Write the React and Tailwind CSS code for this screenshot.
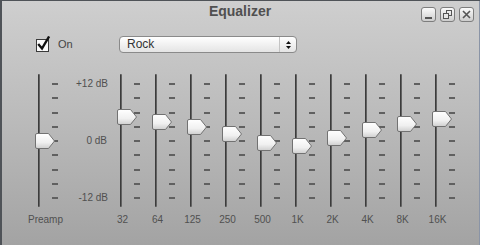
import React from 'react'

const bands = [
  { label: '32', top: 35 },
  { label: '64', top: 40 },
  { label: '125', top: 45 },
  { label: '250', top: 52 },
  { label: '500', top: 61 },
  { label: '1K', top: 64 },
  { label: '2K', top: 56 },
  { label: '4K', top: 48 },
  { label: '8K', top: 42 },
  { label: '16K', top: 37 },
]

const ticks = [0, 1, 2, 3, 4, 5, 6, 7, 8]

function Thumb({ top }) {
  return (
    <svg className="absolute left-[-3px]" style={{ top }} width="21" height="16" viewBox="0 0 21 16">
      <defs>
        <linearGradient id="thumbFill" x1="0" y1="0" x2="0" y2="1">
          <stop offset="0" stopColor="#ffffff" />
          <stop offset="0.6" stopColor="#f0f0f0" />
          <stop offset="1" stopColor="#cfcfcf" />
        </linearGradient>
      </defs>
      <path
        d="M2 0.5 H13.5 L19.5 8 L13.5 15.5 H2 Q0.5 15.5 0.5 14 V2 Q0.5 0.5 2 0.5 Z"
        fill="url(#thumbFill)"
        stroke="#727272"
      />
    </svg>
  )
}

function Slider({ top }) {
  return (
    <div className="flex h-[133px]">
      <div className="relative w-[5px] h-full rounded-full bg-gradient-to-r from-[#2e2e2e] via-[#4a4a4a] to-[#7c7c7c]">
        <Thumb top={top} />
      </div>
      <div className="ml-[12px] flex flex-col justify-between pt-[9px] pb-[8px]">
        {ticks.map((i) => (
          <div key={i} className="w-[6px] h-[2px] bg-[#606060]" />
        ))}
      </div>
    </div>
  )
}

function Column({ label, top, labelClass = '' }) {
  return (
    <div className="w-[35px] shrink-0 flex flex-col">
      <div className="pl-[15px]">
        <Slider top={top} />
      </div>
      <div className={`mt-[7px] text-center text-[10px] leading-[12px] text-[#505050] whitespace-nowrap ${labelClass}`}>
        {label}
      </div>
    </div>
  )
}

function WinButton({ children }) {
  return (
    <div className="w-[15px] h-[15px] rounded-[3px] border border-[#7d7d7d] bg-gradient-to-b from-[#fafafa] to-[#cdcdcd] flex items-center justify-center">
      {children}
    </div>
  )
}

export default function App() {
  return (
    <div className="w-[480px] h-[245px] overflow-hidden bg-gradient-to-b from-[#cfcfcf] via-[#bababa] to-[#a3a3a3] shadow-[inset_2px_1px_0_#4f5358,inset_-1px_0_0_#8a94a6] font-['Liberation_Sans',Arial,sans-serif] select-none">
      {/* title bar */}
      <div className="flex h-[26px]">
        <div className="w-[59px]" />
        <div className="flex-1 pt-[3px] text-center text-[14px] leading-[16px] font-bold text-[#505050]">
          Equalizer
        </div>
        <div className="flex gap-[4px] pt-[7px] pr-[6px]">
          <WinButton>
            <div className="w-[7px] h-[2px] bg-[#555] mt-[6px]" />
          </WinButton>
          <WinButton>
            <svg width="9" height="9" viewBox="0 0 9 9">
              <rect x="3.5" y="0.5" width="5" height="5" fill="none" stroke="#555" />
              <rect x="0.5" y="3.5" width="5" height="5" fill="#e8e8e8" stroke="#555" />
            </svg>
          </WinButton>
          <WinButton>
            <svg width="9" height="9" viewBox="0 0 9 9">
              <path d="M1 1 L8 8 M8 1 L1 8" stroke="#555" strokeWidth="1.6" />
            </svg>
          </WinButton>
        </div>
      </div>

      {/* controls row */}
      <div className="flex items-center h-[17px] mt-[10px] pl-[36px]">
        <div className="w-[83px] flex items-center">
          <svg width="16" height="16" viewBox="0 0 16 16" className="-mt-[1px]">
            <rect x="0.5" y="3.5" width="12" height="12" fill="#fbfbfb" stroke="#3a3a3a" />
            <path d="M3 9 L6 12.5 L12.5 1.5" fill="none" stroke="#111" strokeWidth="2.4" strokeLinecap="square" />
          </svg>
          <span className="ml-[6px] text-[11px] text-[#444]">On</span>
        </div>
        <div className="w-[178px] h-[17px] rounded-[4px] border border-[#8a8a8a] bg-gradient-to-b from-[#ffffff] to-[#e4e4e4] flex items-center">
          <span className="flex-1 pl-[7px] text-[12px] leading-[15px] text-[#333]">Rock</span>
          <div className="w-[17px] h-full border-l border-[#c4c4c4] flex flex-col items-center justify-center gap-[2px]">
            <svg width="5" height="3" viewBox="0 0 5 3"><path d="M2.5 0 L5 3 H0 Z" fill="#111" /></svg>
            <svg width="5" height="3" viewBox="0 0 5 3"><path d="M0 0 H5 L2.5 3 Z" fill="#111" /></svg>
          </div>
        </div>
      </div>

      {/* sliders */}
      <div className="flex mt-[21px] pl-[23px]">
        <Column label="Preamp" top={59} labelClass="pl-[5px]" />
        <div className="w-[47px] h-[133px] flex flex-col justify-between pt-[4px] pb-[3px] text-[10px] leading-[12px] text-[#505050]">
          <div className="text-right -mr-[3px]">+12 dB</div>
          <div className="text-right -mr-[2px]">0 dB</div>
          <div className="text-right -mr-[3px]">-12 dB</div>
        </div>
        {bands.map((b) => (
          <Column key={b.label} label={b.label} top={b.top} />
        ))}
      </div>
    </div>
  )
}
